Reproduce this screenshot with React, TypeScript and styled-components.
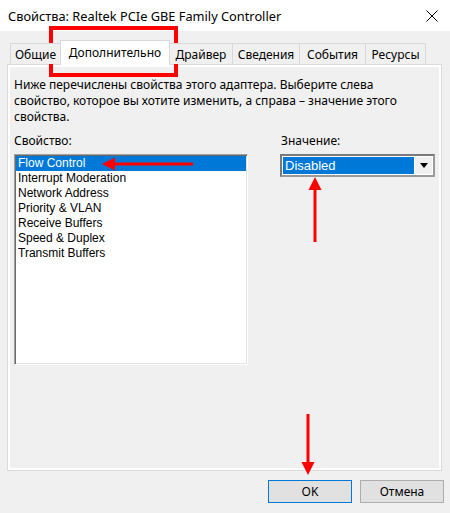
import React from 'react';
import styled, { createGlobalStyle } from 'styled-components';

const GlobalStyle = createGlobalStyle`
  html, body { margin: 0; padding: 0; background: #f0f0f0; }
  #root { width: 450px; height: 513px; }
`;

const Window = styled.div`
  position: relative;
  width: 450px;
  height: 513px;
  background: #f0f0f0;
  display: flex;
  flex-direction: column;
  font-family: "Noto Sans", "Liberation Sans", sans-serif;
  color: #000;
  overflow: hidden;
`;

const TitleBar = styled.div`
  height: 31px;
  flex: none;
  background: #fff;
  display: flex;
  align-items: center;
  justify-content: space-between;
  padding: 0 12px 0 8px;
  box-sizing: border-box;
  font-size: 12.8px;
`;

const Title = styled.span`
  white-space: nowrap;
`;

const Body = styled.div`
  display: flex;
  flex-direction: column;
  padding: 9px 8px 0 7px;
`;

const TabStrip = styled.div`
  display: flex;
  align-items: flex-end;
  height: 24px;
  padding-left: 3px;
`;

const Tab = styled.div<{ $w: number; $active?: boolean }>`
  box-sizing: border-box;
  width: ${(p) => p.$w}px;
  height: ${(p) => (p.$active ? 25 : 21)}px;
  margin-bottom: ${(p) => (p.$active ? -1 : 0)}px;
  margin-right: -1px;
  border: 1px solid #d9d9d9;
  border-bottom: none;
  background: ${(p) => (p.$active ? '#fff' : '#f0f0f0')};
  position: relative;
  z-index: ${(p) => (p.$active ? 2 : 1)};
  display: flex;
  align-items: center;
  justify-content: center;
  font-size: 12px;
  white-space: nowrap;
  padding-bottom: ${(p) => (p.$active ? 2 : 0)}px;
`;

const Panel = styled.div`
  box-sizing: border-box;
  height: 407px;
  border: 1px solid #dadada;
  box-shadow: inset 0 0 0 2px #fff;
  background: #f0f0f0;
  padding: 12px 6px 0 6px;
  display: flex;
  flex-direction: column;
`;

const Description = styled.p`
  margin: 0;
  font-size: 12px;
  line-height: 16px;
  width: 395px;
`;

const Columns = styled.div`
  display: grid;
  grid-template-columns: 234px 155px;
  column-gap: 32px;
  margin-top: 8px;
`;

const Column = styled.div`
  display: flex;
  flex-direction: column;
`;

const FieldLabel = styled.div<{ $indent?: number }>`
  font-size: 12px;
  line-height: 16px;
  margin-bottom: 5px;
  padding-left: ${(p) => p.$indent ?? 0}px;
`;

const ListBox = styled.div`
  box-sizing: border-box;
  height: 211px;
  background: #fff;
  border: 1px solid;
  border-color: #a0a0a0 #ffffff #ffffff #a0a0a0;
  box-shadow: inset 1px 1px 0 #696969, inset -1px -1px 0 #e3e3e3;
  padding: 1px;
  font-family: "Liberation Sans", Arial, sans-serif;
  font-size: 12px;
`;

const ListItem = styled.div<{ $selected?: boolean }>`
  height: 15px;
  line-height: 15px;
  padding-left: 2px;
  white-space: nowrap;
  background: ${(p) => (p.$selected ? '#0078d7' : 'transparent')};
  color: ${(p) => (p.$selected ? '#fff' : '#000')};
`;

const Combo = styled.div`
  box-sizing: border-box;
  height: 23px;
  display: flex;
  border: 2px solid;
  border-color: #7a7a7a #9a9a9a #9a9a9a #7a7a7a;
  padding: 1px;
  background: #fff;
`;

const ComboValue = styled.div`
  flex: 1;
  background: #0078d7;
  color: #fff;
  font-family: "Liberation Sans", Arial, sans-serif;
  font-size: 13px;
  line-height: 17px;
  padding-left: 2px;
`;

const ComboButton = styled.div`
  width: 18px;
  background: #f0f0f0;
  display: flex;
  align-items: center;
  justify-content: center;
  border-left: 1px solid #fff;
  box-sizing: border-box;
`;

const ButtonRow = styled.div`
  display: flex;
  justify-content: flex-end;
  gap: 8px;
  margin-top: 9px;
  margin-right: -2px;
`;

const DialogButton = styled.button<{ $default?: boolean }>`
  box-sizing: border-box;
  width: 84px;
  height: 23px;
  background: #e1e1e1;
  border: 1px solid ${(p) => (p.$default ? '#0078d7' : '#adadad')};
  font-family: "Noto Sans", "Liberation Sans", sans-serif;
  font-size: 12px;
  color: #000;
  padding: 0;
`;

const Overlay = styled.svg`
  position: absolute;
  left: 0;
  top: 0;
  pointer-events: none;
`;

const items = [
  'Flow Control',
  'Interrupt Moderation',
  'Network Address',
  'Priority & VLAN',
  'Receive Buffers',
  'Speed & Duplex',
  'Transmit Buffers',
];

const tabs: { label: string; w: number; active?: boolean }[] = [
  { label: 'Общие', w: 51 },
  { label: 'Дополнительно', w: 110, active: true },
  { label: 'Драйвер', w: 64 },
  { label: 'Сведения', w: 68 },
  { label: 'События', w: 67 },
  { label: 'Ресурсы', w: 61 },
];

export default function App() {
  return (
    <>
      <GlobalStyle />
      <Window>
        <TitleBar>
          <Title>Свойства: Realtek PCIe GBE Family Controller</Title>
          <svg width="12" height="12" viewBox="0 0 12 12">
            <path d="M0.5 0.5 L11.5 11.5 M11.5 0.5 L0.5 11.5" stroke="#000" strokeWidth="1" fill="none" />
          </svg>
        </TitleBar>
        <Body>
          <TabStrip>
            {tabs.map((t) => (
              <Tab key={t.label} $w={t.w} $active={t.active}>
                {t.label}
              </Tab>
            ))}
          </TabStrip>
          <Panel>
            <Description>
              Ниже перечислены свойства этого адаптера. Выберите слева свойство, которое вы хотите изменить, а справа – значение этого свойства.
            </Description>
            <Columns>
              <Column>
                <FieldLabel>Свойство:</FieldLabel>
                <ListBox>
                  {items.map((it, i) => (
                    <ListItem key={it} $selected={i === 0}>
                      {it}
                    </ListItem>
                  ))}
                </ListBox>
              </Column>
              <Column>
                <FieldLabel $indent={1}>Значение:</FieldLabel>
                <Combo>
                  <ComboValue>Disabled</ComboValue>
                  <ComboButton>
                    <svg width="8" height="5" viewBox="0 0 8 5">
                      <path d="M0 0 H8 L4 5 Z" fill="#000" />
                    </svg>
                  </ComboButton>
                </Combo>
              </Column>
            </Columns>
          </Panel>
          <ButtonRow>
            <DialogButton $default>OK</DialogButton>
            <DialogButton>Отмена</DialogButton>
          </ButtonRow>
        </Body>
        <Overlay width="450" height="513" viewBox="0 0 450 513">
          <rect x="51" y="28" width="125" height="47" fill="none" stroke="#ff0000" strokeWidth="4" />
          <line x1="193" y1="164" x2="112" y2="164" stroke="#ff0000" strokeWidth="3" />
          <polygon points="102,164 115,157.5 115,170.5" fill="#ff0000" />
          <line x1="315" y1="242" x2="315" y2="188" stroke="#ff0000" strokeWidth="3" />
          <polygon points="315,177 308.5,190 321.5,190" fill="#ff0000" />
          <line x1="308" y1="414" x2="308" y2="464" stroke="#ff0000" strokeWidth="3" />
          <polygon points="308,475 301.5,462 314.5,462" fill="#ff0000" />
        </Overlay>
      </Window>
    </>
  );
}
